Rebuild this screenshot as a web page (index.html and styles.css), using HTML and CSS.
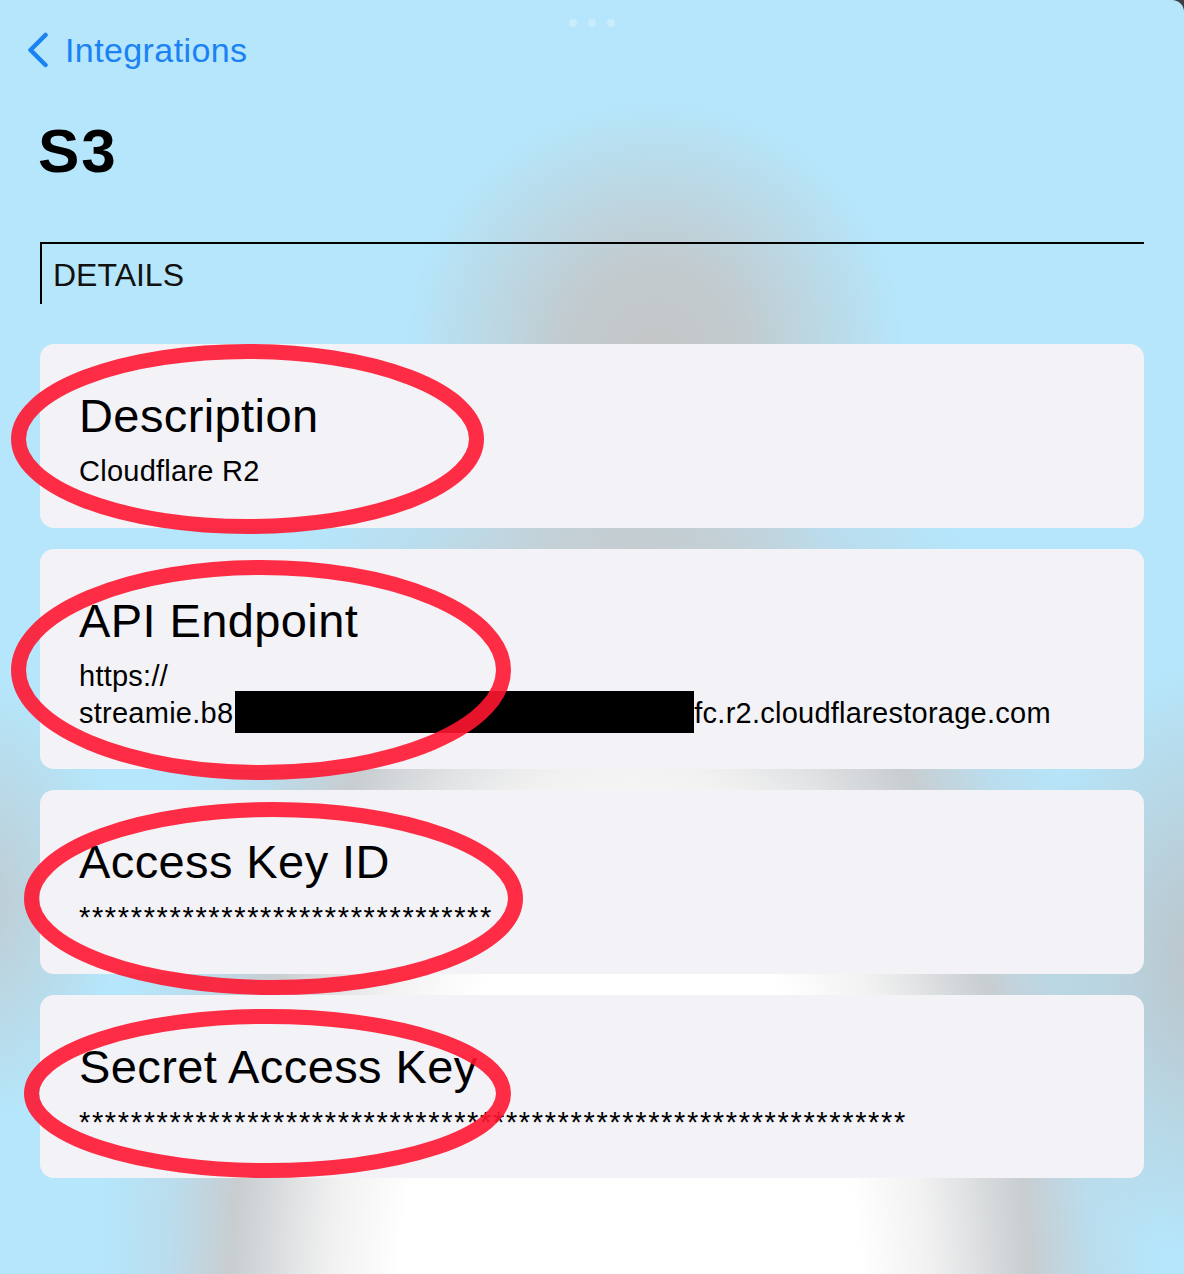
FILE: index.html
```html
<!DOCTYPE html>
<html lang="en">
<head>
<meta charset="utf-8">
<title>S3</title>
<link rel="stylesheet" href="styles.css">
</head>
<body>
<div class="screen">
  <div class="grabber"><span></span><span></span><span></span></div>
  <nav class="nav">
    <svg class="chevron" width="22" height="36" viewBox="0 0 22 36" aria-hidden="true">
      <path d="M19.5 3 L4.5 18 L19.5 33" fill="none" stroke="currentColor" stroke-width="4.5" stroke-linecap="round" stroke-linejoin="round"/>
    </svg>
    <span class="nav-label">Integrations</span>
  </nav>
  <h1 class="title">S3</h1>
  <div class="section-header">DETAILS</div>
  <div class="cards">
    <div class="card">
      <div class="card-title">Description</div>
      <div class="card-value">Cloudflare R2</div>
    </div>
    <div class="card">
      <div class="card-title">API Endpoint</div>
      <div class="card-value">https://<br><span class="nowrap">streamie.b8<span class="redact"></span>fc.r2.cloudflarestorage.com</span></div>
    </div>
    <div class="card">
      <div class="card-title">Access Key ID</div>
      <div class="card-value masked">********************************</div>
    </div>
    <div class="card">
      <div class="card-title">Secret Access Key</div>
      <div class="card-value masked">****************************************************************</div>
    </div>
  </div>
  <svg class="annotations" width="1184" height="1274" viewBox="0 0 1184 1274" aria-hidden="true">
    <g fill="none" stroke="rgb(255,22,48)" stroke-opacity="0.9" stroke-width="15">
      <ellipse cx="247.5" cy="439" rx="229" ry="87.5"/>
      <ellipse cx="261" cy="670" rx="242.5" ry="102.5"/>
      <ellipse cx="273.5" cy="898.5" rx="242" ry="89"/>
      <ellipse cx="267.5" cy="1093.5" rx="236" ry="77"/>
    </g>
  </svg>
</div>
</body>
</html>
```

FILE: styles.css
```css
html {
  background: #3b4046;
}

body {
  margin: 0;
  font-family: "Liberation Sans", Arial, sans-serif;
  color: #000;
}

.screen {
  position: relative;
  width: 1184px;
  height: 1274px;
  overflow: hidden;
  box-sizing: border-box;
  padding-top: 19px;
  border-top-right-radius: 12px;
  background:
    radial-gradient(ellipse 250px 250px at 655px 350px, rgba(196,198,199,1) 0%, rgba(196,198,199,0.85) 35%, rgba(196,198,199,0) 100%),
    radial-gradient(ellipse 200px 300px at 1210px 960px, rgba(188,195,199,1) 0%, rgba(188,195,199,0) 100%),
    radial-gradient(ellipse 140px 220px at -20px 900px, rgba(192,200,204,0.9) 0%, rgba(192,200,204,0) 100%),
    radial-gradient(ellipse 580px 1100px at 630px 1330px, #ffffff 0%, #ffffff 40%, #f1f1f1 52%, #c8cdd0 69%, rgba(190,215,228,0.6) 80%, rgba(181,230,251,0) 92%),
    #b5e6fb;
}

.grabber {
  display: flex;
  justify-content: center;
  gap: 11px;
  height: 8px;
}

.grabber span {
  width: 8px;
  height: 8px;
  border-radius: 50%;
  background: rgba(255, 255, 255, 0.28);
}

.nav {
  display: flex;
  align-items: center;
  gap: 17px;
  height: 40px;
  margin-top: 3px;
  padding-left: 26px;
  color: #1a82f4;
}

.chevron {
  display: block;
  flex: none;
}

.nav-label {
  font-size: 34px;
  line-height: 40px;
  letter-spacing: 0.4px;
}

.title {
  margin: 46px 0 0;
  padding-left: 38px;
  font-size: 62px;
  line-height: 70px;
  font-weight: 700;
  letter-spacing: 2px;
}

.section-header {
  margin: 56px 40px 0;
  border-top: 2px solid #000;
  border-left: 2px solid #000;
  padding: 2px 0 0 11px;
  font-size: 32px;
  line-height: 58px;
  color: #111;
}

.cards {
  display: flex;
  flex-direction: column;
  gap: 21px;
  margin: 40px 40px 0;
}

.card {
  background: #f2f2f7;
  border-radius: 14px;
  padding: 44px 20px 37.5px 39px;
}

.card-title {
  font-size: 47px;
  line-height: 56px;
  margin-bottom: 9px;
  letter-spacing: 0.4px;
}

.card-value {
  font-size: 29px;
  line-height: 37px;
  letter-spacing: 0.25px;
}

.nowrap {
  white-space: nowrap;
}

.masked {
  letter-spacing: 1.65px;
}

.redact {
  display: inline-block;
  width: 459px;
  height: 42px;
  margin: -4px 0 -4px 2px;
  vertical-align: -6px;
  background: #000;
}

.annotations {
  position: absolute;
  top: 0;
  left: 0;
  pointer-events: none;
}
```
